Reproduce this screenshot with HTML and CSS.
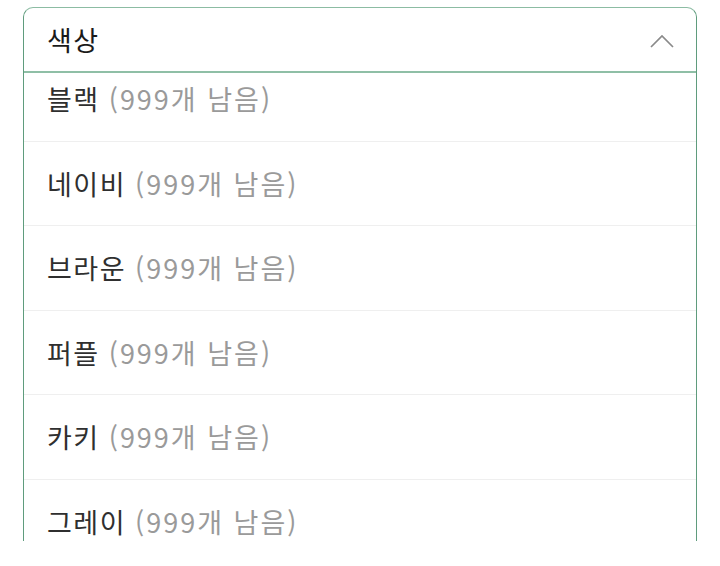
FILE: index.html
```html
<!DOCTYPE html>
<html lang="ko">
<head>
<meta charset="utf-8">
<title>색상 선택</title>
<link rel="stylesheet" href="styles.css">
</head>
<body>
<div class="page">
  <section class="select">
    <header class="select-head">
      <span class="select-title">색상</span>
      <svg class="chevron" width="24" height="14" viewBox="0 0 24 14" aria-hidden="true">
        <path d="M1 13 L12 2 L23 13" fill="none" stroke="#8a8a8a" stroke-width="1.7"/>
      </svg>
    </header>
    <div class="select-body">
      <ul class="options">
        <li class="option"><span class="label"><span class="name">블랙</span> <span class="stock">(999개 남음)</span></span></li>
        <li class="option"><span class="label"><span class="name">네이비</span> <span class="stock">(999개 남음)</span></span></li>
        <li class="option"><span class="label"><span class="name">브라운</span> <span class="stock">(999개 남음)</span></span></li>
        <li class="option"><span class="label"><span class="name">퍼플</span> <span class="stock">(999개 남음)</span></span></li>
        <li class="option"><span class="label"><span class="name">카키</span> <span class="stock">(999개 남음)</span></span></li>
        <li class="option"><span class="label"><span class="name">그레이</span> <span class="stock">(999개 남음)</span></span></li>
      </ul>
    </div>
  </section>
</div>
</body>
</html>
```

FILE: styles.css
```css
html, body {
  margin: 0;
  padding: 0;
  background: #ffffff;
}

body {
  font-family: "Noto Sans CJK KR", "Noto Sans", sans-serif;
}

.page {
  padding: 7px 23px 0 23px;
  height: 566px;
  box-sizing: border-box;
}

.select {
  height: 533px;
  display: flex;
  flex-direction: column;
  border: 1px solid #5f9c7d;
  border-bottom: none;
  border-top-color: #8cbca3;
  border-radius: 10px 10px 0 0;
  background: #ffffff;
  overflow: hidden;
}

.select-head {
  flex: 0 0 auto;
  height: 63px;
  display: flex;
  align-items: center;
  justify-content: space-between;
  padding: 0 22px 0 23px;
  border-bottom: 2px solid #8fbfa6;
}

.select-title {
  font-size: 27px;
  letter-spacing: 1.5px;
  color: #1a1a1a;
  line-height: 1;
}

.chevron {
  display: block;
  margin-top: 2px;
}

.select-body {
  flex: 1 1 auto;
  overflow: hidden;
}

.options {
  list-style: none;
  margin: -16px 0 0 0;
  padding: 0;
}

.option {
  height: 83.5px;
  display: flex;
  align-items: center;
  padding: 0 23px;
  border-bottom: 1px solid #efefef;
}

.label {
  font-size: 27px;
  letter-spacing: 1.5px;
  line-height: 1;
  white-space: nowrap;
}

.name {
  color: #2f2f2f;
}

.stock {
  color: #9a9a9a;
  letter-spacing: 2px;
}
```
